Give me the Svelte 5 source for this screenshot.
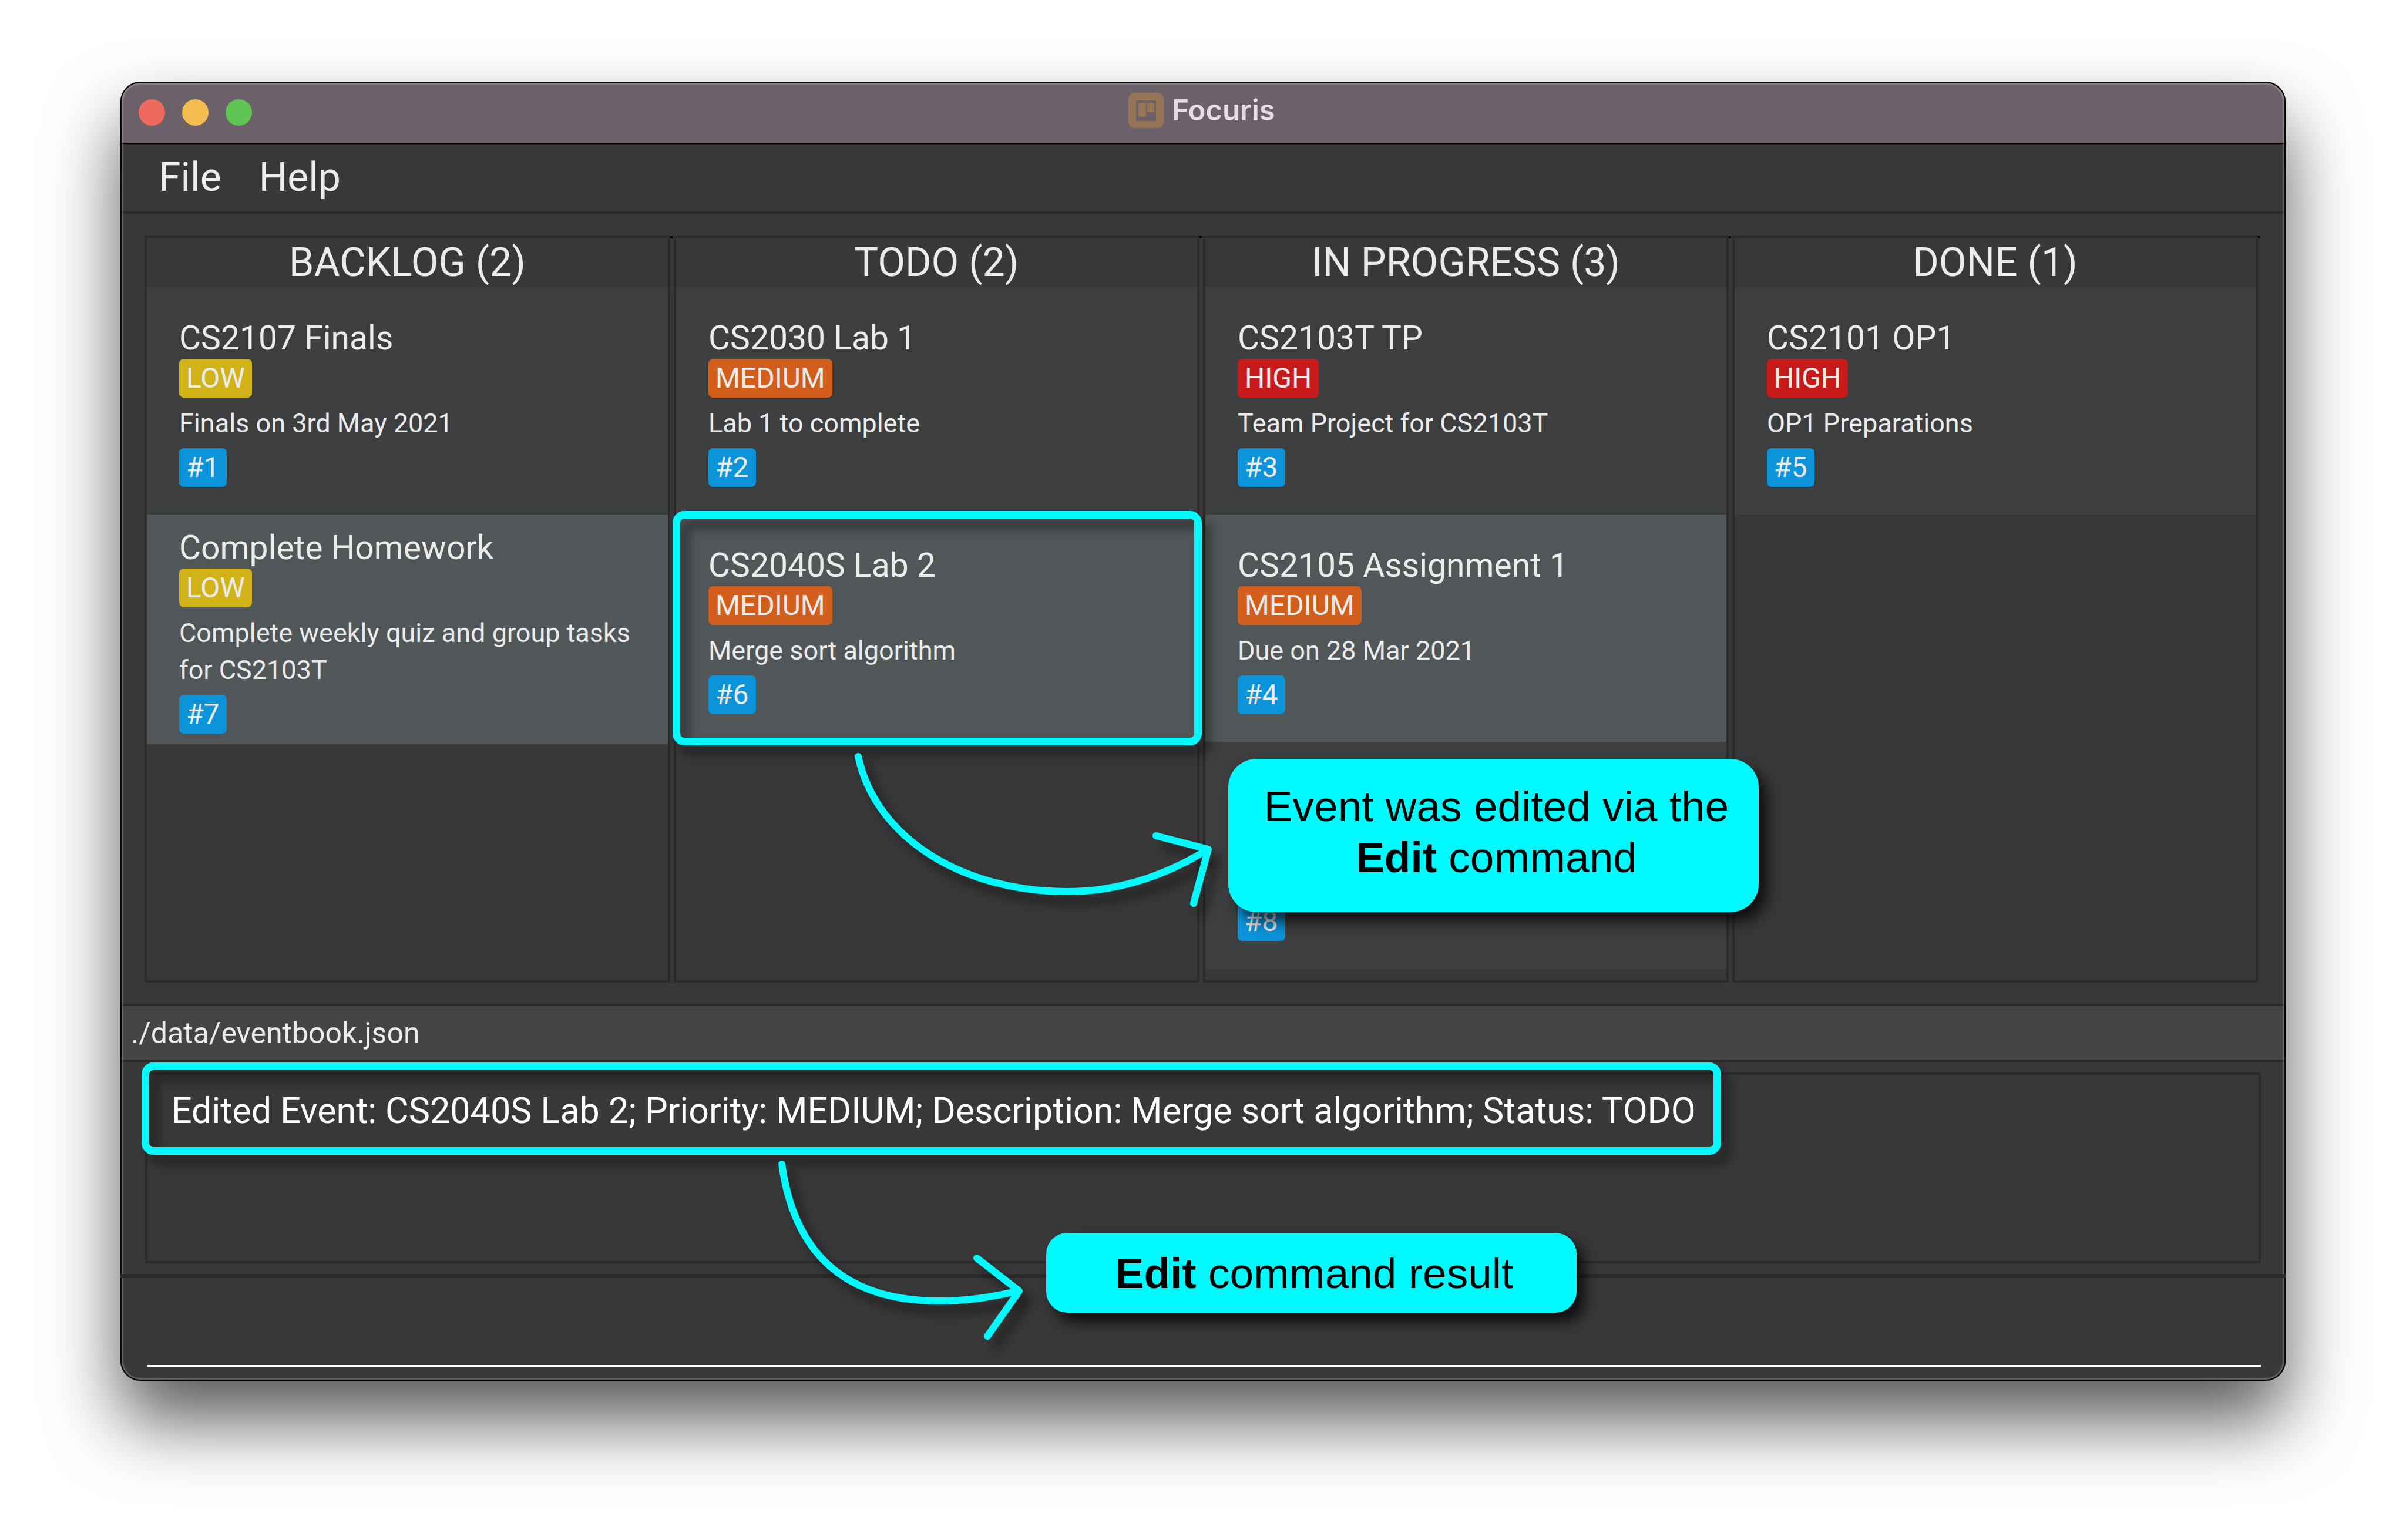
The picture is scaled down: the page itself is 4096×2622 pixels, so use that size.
<script>
  const columns = [
    {
      name: 'BACKLOG',
      count: 2,
      events: [
        { id: 1, title: 'CS2107 Finals', priority: 'LOW', description: 'Finals on 3rd May 2021' },
        { id: 7, title: 'Complete Homework', priority: 'LOW', description: 'Complete weekly quiz and group tasks for CS2103T' }
      ]
    },
    {
      name: 'TODO',
      count: 2,
      events: [
        { id: 2, title: 'CS2030 Lab 1', priority: 'MEDIUM', description: 'Lab 1 to complete' },
        { id: 6, title: 'CS2040S Lab 2', priority: 'MEDIUM', description: 'Merge sort algorithm', edited: true }
      ]
    },
    {
      name: 'IN PROGRESS',
      count: 3,
      events: [
        { id: 3, title: 'CS2103T TP', priority: 'HIGH', description: 'Team Project for CS2103T' },
        { id: 4, title: 'CS2105 Assignment 1', priority: 'MEDIUM', description: 'Due on 28 Mar 2021' },
        { id: 8 }
      ]
    },
    {
      name: 'DONE',
      count: 1,
      events: [{ id: 5, title: 'CS2101 OP1', priority: 'HIGH', description: 'OP1 Preparations' }]
    }
  ];
  let command = '';
</script>

<main class="page">
  <div class="window">
    <header class="titlebar">
      <div class="lights">
        <button class="light close" aria-label="Close"></button>
        <button class="light minimise" aria-label="Minimise"></button>
        <button class="light zoom" aria-label="Zoom"></button>
      </div>
      <h1 class="title">
        <svg class="logo" viewBox="0 0 60 60" aria-hidden="true">
          <rect width="60" height="60" rx="10" fill="#957556" />
          <rect x="13" y="13" width="34" height="35" fill="#6c6069" />
          <rect x="17" y="17" width="13" height="24" fill="#957556" />
          <rect x="32" y="17" width="12" height="16" fill="#957556" />
        </svg>
        Focuris
      </h1>
    </header>

    <nav class="menu">
      <button>File</button>
      <button>Help</button>
    </nav>

    <section class="board-area">
      <div class="board">
        {#each columns as column}
          <section class="column">
            <h2>{column.name} ({column.count})</h2>
            {#each column.events as event}
              <article class="card" class:edited={event.edited} class:brief={!event.title}>
                {#if event.title}
                  <h3>{event.title}</h3>
                  <span class="chip {event.priority.toLowerCase()}">{event.priority}</span>
                  <p>{event.description}</p>
                {/if}
                <span class="chip id">#{event.id}</span>
              </article>
            {/each}
          </section>
        {/each}
      </div>

      <svg class="arrow event-arrow" viewBox="0 0 640 300" aria-hidden="true">
        <path d="M21 28C51 168 200 258 376 258C465 258 545 230 615 187" />
        <path d="M528 163L617 186L592 278" />
      </svg>
      <aside class="callout event-note">Event was edited via the <b>Edit</b> command</aside>
    </section>

    <div class="statusbar">./data/eventbook.json</div>

    <section class="result-area">
      <div class="result" role="status">
        <span>Edited Event: CS2040S Lab 2; Priority: MEDIUM; Description: Merge sort algorithm; Status: TODO</span>
      </div>
      <div class="outline"></div>
      <svg class="arrow result-arrow" viewBox="0 0 460 340" aria-hidden="true">
        <path d="M31 22C50 160 125 255 299 255C350 255 390 248 433 238" />
        <path d="M363 182L435 238L381 315" />
      </svg>
      <aside class="callout result-note"><b>Edit</b> command result</aside>
    </section>

    <div class="command">
      <input type="text" aria-label="Command" bind:value={command} />
    </div>
  </div>
</main>

<style>
  :global(body) {
    background: #fff;
  }

  .page,
  .page * {
    box-sizing: border-box;
    margin: 0;
  }

  .page {
    display: flex;
    min-height: 100vh;
    padding: 139px 205px 271px;
    font-family: Roboto, 'Liberation Sans', sans-serif;
    color: #ebebeb;
  }

  .window {
    position: relative;
    display: flex;
    flex: 1;
    flex-direction: column;
    min-width: 0;
    border-radius: 34px;
    background: #383838;
    box-shadow: 0 68px 122px rgba(0, 0, 0, 0.65);
  }

  /* Bright rim and black hairline around the frame */
  .window::after {
    content: '';
    position: absolute;
    inset: 0;
    border: 2px solid #070707;
    border-radius: 34px;
    box-shadow: inset 0 0 0 3px rgba(255, 255, 255, 0.19);
    pointer-events: none;
  }

  .titlebar {
    display: grid;
    grid-template-columns: 1fr auto 1fr;
    align-items: center;
    height: 106px;
    padding: 0 31px;
    border-bottom: 2px solid #000;
    border-radius: 34px 34px 0 0;
    background: #6c6069;
  }

  .lights {
    display: flex;
    gap: 29px;
  }

  .light {
    width: 45px;
    height: 45px;
    padding: 0;
    border: 0;
    border-radius: 50%;
  }

  .close {
    background: #ee6a5f;
  }

  .minimise {
    background: #f5bd4f;
  }

  .zoom {
    background: #61c554;
  }

  .title {
    display: flex;
    align-items: center;
    gap: 14px;
    padding: 0 4px 6px 0;
    color: #e6dce7;
    font: 600 49px/60px Inter, sans-serif;
  }

  .logo {
    width: 60px;
    height: 60px;
  }

  .menu {
    display: flex;
    gap: 64px;
    height: 119px;
    padding: 0 65px;
    border-top: 2px solid #2a2a2a;
    border-bottom: 4px solid #2b2b2b;
  }

  .menu button {
    padding: 0 0 4px;
    border: 0;
    background: none;
    color: inherit;
    font: 400 68px/80px Roboto, sans-serif;
  }

  .board-area {
    position: relative;
    z-index: 1;
    display: flex;
    flex: 1;
    padding: 37px 47px 36px 41px;
  }

  .board {
    display: grid;
    flex: 1;
    grid-template-columns: repeat(4, 1fr);
    gap: 6px;
  }

  .column {
    position: relative;
    min-width: 0;
    border: 4px solid #2b2b2b;
  }

  .column::after {
    content: '';
    position: absolute;
    top: -3px;
    right: -8px;
    width: 4px;
    height: 4px;
    background: #000;
  }

  .column h2 {
    font-weight: 400;
    font-size: 68px;
    line-height: 84px;
    text-align: center;
  }

  .card {
    position: relative;
    display: flex;
    flex-direction: column;
    align-items: flex-start;
    justify-content: center;
    min-height: 387px;
    padding: 22px 40px 18px 55px;
    background: #3c3e3f;
  }

  .card:nth-of-type(even) {
    background: #515658;
  }

  .card.brief {
    justify-content: flex-end;
    padding-bottom: 48px;
  }

  .card h3 {
    font-weight: 400;
    font-size: 57px;
    line-height: 70px;
  }

  .card p {
    margin: 12px 0 11px;
    font-size: 45px;
    line-height: 63px;
  }

  .chip {
    padding: 0 12px;
    border-radius: 8px;
    font-size: 48px;
    line-height: 66px;
  }

  .low {
    background: #d1b317;
  }

  .medium {
    background: #d15f1b;
  }

  .high {
    background: #c91a1b;
  }

  .id {
    background: #0b94d9;
  }

  .edited::after,
  .outline {
    position: absolute;
    z-index: 2;
    border: 13px solid #00fbff;
    border-radius: 20px;
    filter: drop-shadow(14px 16px 9px rgba(0, 0, 0, 0.45));
    pointer-events: none;
  }

  .edited::after {
    content: '';
    inset: -6px -8px -6px -6px;
  }

  .outline {
    top: 1px;
    left: 36px;
    width: 2689px;
    height: 157px;
  }

  .arrow {
    position: absolute;
    z-index: 2;
    overflow: visible;
    fill: none;
    stroke: #00fbff;
    stroke-width: 12;
    stroke-linecap: round;
    stroke-linejoin: round;
    filter: drop-shadow(14px 16px 9px rgba(0, 0, 0, 0.45));
    pointer-events: none;
  }

  .event-arrow {
    top: 896px;
    left: 1235px;
    width: 640px;
    height: 300px;
  }

  .result-arrow {
    top: 152px;
    left: 1095px;
    width: 460px;
    height: 340px;
  }

  .callout {
    position: absolute;
    z-index: 2;
    width: 903px;
    background: #00fbff;
    box-shadow: 14px 16px 24px rgba(0, 0, 0, 0.75);
    color: #000;
    font: 400 73px/87px 'Liberation Sans', sans-serif;
    text-align: center;
  }

  .event-note {
    top: 928px;
    left: 1886px;
    padding: 37px 44px 50px 54px;
    border-radius: 48px;
  }

  .result-note {
    top: 291px;
    left: 1576px;
    padding: 25px 44px 24px 54px;
    border-radius: 36px;
  }

  .statusbar {
    padding: 2px 18px 0;
    border-top: 4px solid #2b2b2b;
    border-bottom: 4px solid #2b2b2b;
    background: #444;
    font-size: 50px;
    line-height: 89px;
  }

  .result-area {
    position: relative;
    z-index: 2;
    padding: 18px 42px;
    border-bottom: 7px solid #2a2a2a;
  }

  .result {
    height: 325px;
    padding: 21px 41px;
    border: 4px solid #2b2b2b;
    color: #fff;
    font-size: 61px;
    line-height: 80px;
  }

  .command {
    display: flex;
    height: 175px;
    padding: 0 42px 23px 45px;
  }

  .command input {
    flex: 1;
    min-width: 0;
    padding: 0;
    border: 0;
    border-bottom: 4px solid #fff;
    outline: 0;
    background: transparent;
    color: #fff;
    font: 400 68px/80px Roboto, sans-serif;
  }
</style>
